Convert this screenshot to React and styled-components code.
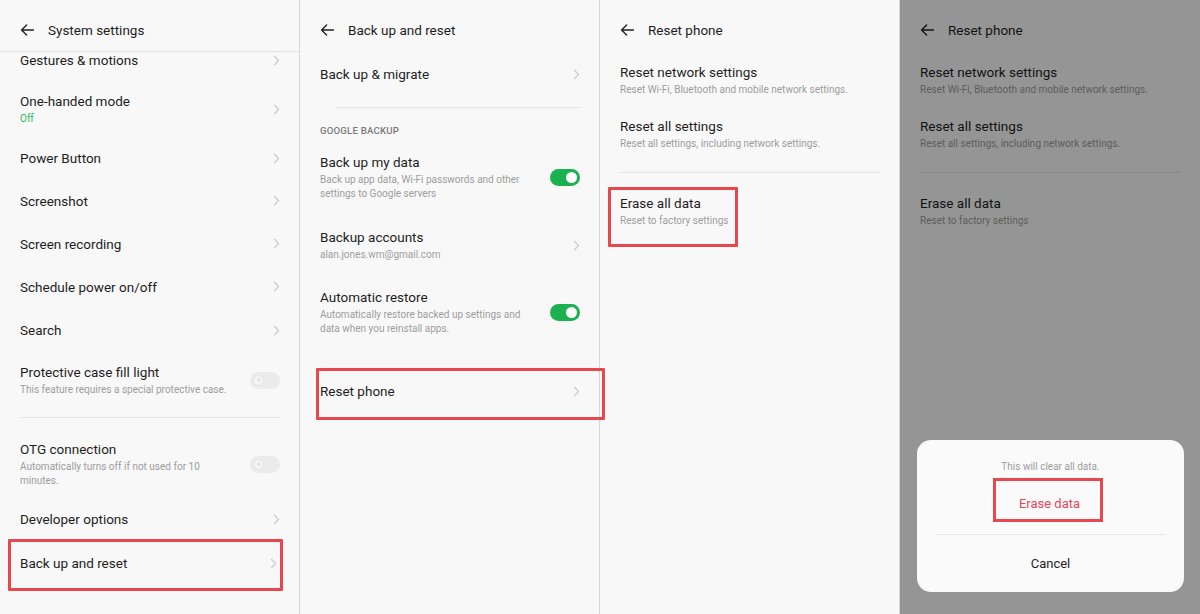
import React from "react";
import styled, { createGlobalStyle } from "styled-components";

const Global = createGlobalStyle`
  html, body {
    margin: 0;
    padding: 0;
    background: #f8f8f8;
    font-family: Roboto, "Noto Sans", Arial, sans-serif;
    -webkit-font-smoothing: antialiased;
  }
`;

const Screens = styled.div`
  display: flex;
  width: 1200px;
  height: 614px;
  overflow: hidden;
`;

const Panel = styled.div`
  position: relative;
  width: 300px;
  height: 614px;
  box-sizing: border-box;
  display: flex;
  flex-direction: column;
  background: #f8f8f8;
  border-right: ${(p) => (p.$last ? "none" : "1px solid #d6d6d6")};
`;

const Header = styled.div`
  display: flex;
  align-items: center;
  gap: 14px;
  height: 52px;
  flex-shrink: 0;
  box-sizing: border-box;
  padding: 9px 20px 0;
  border-bottom: ${(p) => (p.$line ? "1px solid #e2e2e2" : "1px solid transparent")};
  font-size: 13.5px;
  color: #1e1e1e;
`;

const Row = styled.div`
  display: flex;
  align-items: ${(p) => (p.$top ? "flex-start" : "center")};
  justify-content: space-between;
  height: ${(p) => p.$h}px;
  flex-shrink: 0;
  box-sizing: border-box;
  margin-top: ${(p) => p.$mt || 0}px;
  padding-left: ${(p) => p.$pl ?? 20}px;
  padding-right: ${(p) => p.$pr ?? 19}px;
  padding-top: ${(p) => p.$pt || 0}px;
  padding-bottom: ${(p) => p.$pb || 0}px;
`;

const TextBlock = styled.div`
  display: flex;
  flex-direction: column;
`;

const Title = styled.div`
  font-size: 13.5px;
  line-height: 18px;
  color: #1e1e1e;
  white-space: nowrap;
`;

const Sub = styled.div`
  margin-top: ${(p) => (p.$first ? 2 : 0)}px;
  font-size: 10px;
  line-height: 14px;
  color: ${(p) => (p.$green ? "#27b866" : "#9d9d9d")};
  white-space: nowrap;
`;

const SectionLabel = styled.div`
  height: 14px;
  margin-top: ${(p) => p.$mt}px;
  padding-left: 20px;
  font-size: 9.6px;
  line-height: 14px;
  font-weight: 500;
  letter-spacing: 0.2px;
  color: #7b7b7b;
`;

const Divider = styled.div`
  height: 1px;
  flex-shrink: 0;
  margin: ${(p) => p.$mt}px 19px 0 ${(p) => p.$ml ?? 20}px;
  background: #e4e4e4;
`;

/* red annotation frame around a row */
const Highlight = styled.div`
  position: relative;
  z-index: 1;
  flex-shrink: 0;
  align-self: ${(p) => (p.$fit ? "flex-start" : "stretch")};
  margin: ${(p) => p.$mt || 0}px ${(p) => p.$mr || 0}px 0 ${(p) => p.$ml || 0}px;
  border: 3px solid #e8474d;
  border-radius: 1px;
`;

const Track = styled.div`
  position: relative;
  width: 30px;
  height: 17px;
  border-radius: 9px;
  flex-shrink: 0;
  background: ${(p) => (p.$on ? "#1bb150" : "#ebebeb")};
`;

const Knob = styled.div`
  position: absolute;
  top: 3px;
  left: ${(p) => (p.$on ? "16px" : "3px")};
  width: 11px;
  height: 11px;
  border-radius: 50%;
  box-sizing: border-box;
  background: ${(p) => (p.$on ? "#ffffff" : "#f6f6f6")};
  border: ${(p) => (p.$on ? "none" : "1px solid #e2e2e2")};
  display: flex;
  align-items: center;
  justify-content: center;
`;

const Dim = styled.div`
  position: absolute;
  inset: 0;
  background: rgba(0, 0, 0, 0.4);
  z-index: 2;
`;

const Sheet = styled.div`
  position: absolute;
  left: 17px;
  right: 16px;
  bottom: 22px;
  height: 152px;
  z-index: 3;
  box-sizing: border-box;
  padding-top: 20px;
  border-radius: 14px;
  background: #fafafa;
  display: flex;
  flex-direction: column;
  align-items: center;
`;

const SheetNote = styled.div`
  font-size: 10px;
  line-height: 14px;
  color: #9d9d9d;
`;

const EraseFrame = styled.div`
  display: flex;
  align-items: center;
  justify-content: center;
  box-sizing: border-box;
  width: 110px;
  height: 44px;
  margin: 4px 6px 0 0;
  padding: 7px 0 0 4px;
  border: 3px solid #e8474d;
`;

const EraseText = styled.div`
  font-size: 13px;
  color: #e9465a;
`;

const SheetLine = styled.div`
  align-self: stretch;
  height: 1px;
  margin: 12px 19px 0;
  background: #e6e6e6;
`;

const Cancel = styled.div`
  flex: 1;
  display: flex;
  align-items: center;
  font-size: 13px;
  color: #1e1e1e;
`;

const Back = () => (
  <svg width="14" height="12" viewBox="0 0 14 12" fill="none">
    <path
      d="M13.5 6H1.6M6.6 1L1.6 6l5 5"
      stroke="#222"
      strokeWidth="1.4"
      strokeLinecap="round"
      strokeLinejoin="round"
    />
  </svg>
);

const Chevron = () => (
  <svg width="7" height="11" viewBox="0 0 7 11" fill="none">
    <path d="M1.2 1l4.4 4.5-4.4 4.5" stroke="#cacaca" strokeWidth="1.2" />
  </svg>
);

const Toggle = ({ on }) => (
  <Track $on={on}>
    <Knob $on={on}>
      {!on && (
        <svg width="6" height="6" viewBox="0 0 6 6">
          <path d="M3 0.5v5M0.5 3h5" stroke="#dcdcdc" strokeWidth="1" />
        </svg>
      )}
    </Knob>
  </Track>
);

const Item = ({ title, sub = [], green, children, ...rest }) => (
  <Row {...rest}>
    <TextBlock>
      <Title>{title}</Title>
      {sub.map((line, i) => (
        <Sub key={i} $green={green} $first={i === 0}>
          {line}
        </Sub>
      ))}
    </TextBlock>
    {children}
  </Row>
);

const SystemSettings = () => (
  <Panel>
    <Header $line>
      <Back />
      System settings
    </Header>
    <Item title="Gestures & motions" $h={16}>
      <Chevron />
    </Item>
    <Item title="One-handed mode" sub={["Off"]} green $h={46} $mt={18}>
      <Chevron />
    </Item>
    <Item title="Power Button" $h={42} $mt={5}>
      <Chevron />
    </Item>
    <Item title="Screenshot" $h={43}>
      <Chevron />
    </Item>
    <Item title="Screen recording" $h={43}>
      <Chevron />
    </Item>
    <Item title="Schedule power on/off" $h={43}>
      <Chevron />
    </Item>
    <Item title="Search" $h={44}>
      <Chevron />
    </Item>
    <Item
      title="Protective case fill light"
      sub={["This feature requires a special protective case."]}
      $h={48}
      $mt={4}
    >
      <Toggle />
    </Item>
    <Divider $mt={13} />
    <Item
      title="OTG connection"
      sub={["Automatically turns off if not used for 10", "minutes."]}
      $h={56}
      $mt={18}
    >
      <Toggle />
    </Item>
    <Item title="Developer options" $h={40} $mt={7}>
      <Chevron />
    </Item>
    <Highlight $ml={8} $mr={16}>
      <Item title="Back up and reset" $h={46} $pl={9} $pr={3} $pb={4}>
        <Chevron />
      </Item>
    </Highlight>
  </Panel>
);

const BackupReset = () => (
  <Panel>
    <Header>
      <Back />
      Back up and reset
    </Header>
    <Item title="Back up & migrate" $h={36} $mt={4}>
      <Chevron />
    </Item>
    <Divider $mt={15} $ml={36} />
    <SectionLabel $mt={16}>GOOGLE BACKUP</SectionLabel>
    <Item
      title="Back up my data"
      sub={["Back up app data, Wi-Fi passwords and other", "settings to Google servers"]}
      $h={50}
      $mt={14}
    >
      <Toggle on />
    </Item>
    <Item title="Backup accounts" sub={["alan.jones.wm@gmail.com"]} $h={50} $mt={18}>
      <Chevron />
    </Item>
    <Item
      title="Automatic restore"
      sub={["Automatically restore backed up settings and", "data when you reinstall apps."]}
      $h={50}
      $mt={17}
    >
      <Toggle on />
    </Item>
    <Highlight $mt={31} $ml={16} $mr={-6}>
      <Item title="Reset phone" $h={46} $pl={1} $pr={22} $pb={6}>
        <Chevron />
      </Item>
    </Highlight>
  </Panel>
);

const ResetList = ({ marked }) => {
  const erase = (
    <Item
      title="Erase all data"
      sub={["Reset to factory settings"]}
      $top
      $h={marked ? 54 : 60}
      $mt={marked ? 0 : 14}
      $pt={marked ? 4 : 7}
      $pl={marked ? 9 : 20}
      $pr={6}
    />
  );
  return (
    <>
      <Header>
        <Back />
        Reset phone
      </Header>
      <Item
        title="Reset network settings"
        sub={["Reset Wi-Fi, Bluetooth and mobile network settings."]}
        $h={48}
        $mt={4}
      />
      <Item
        title="Reset all settings"
        sub={["Reset all settings, including network settings."]}
        $h={48}
        $mt={6}
      />
      <Divider $mt={14} />
      {marked ? (
        <Highlight $fit $mt={14} $ml={8}>
          {erase}
        </Highlight>
      ) : (
        erase
      )}
    </>
  );
};

export default function App() {
  return (
    <>
      <Global />
      <Screens>
        <SystemSettings />
        <BackupReset />
        <Panel>
          <ResetList marked />
        </Panel>
        <Panel $last>
          <ResetList />
          <Dim />
          <Sheet>
            <SheetNote>This will clear all data.</SheetNote>
            <EraseFrame>
              <EraseText>Erase data</EraseText>
            </EraseFrame>
            <SheetLine />
            <Cancel>Cancel</Cancel>
          </Sheet>
        </Panel>
      </Screens>
    </>
  );
}
